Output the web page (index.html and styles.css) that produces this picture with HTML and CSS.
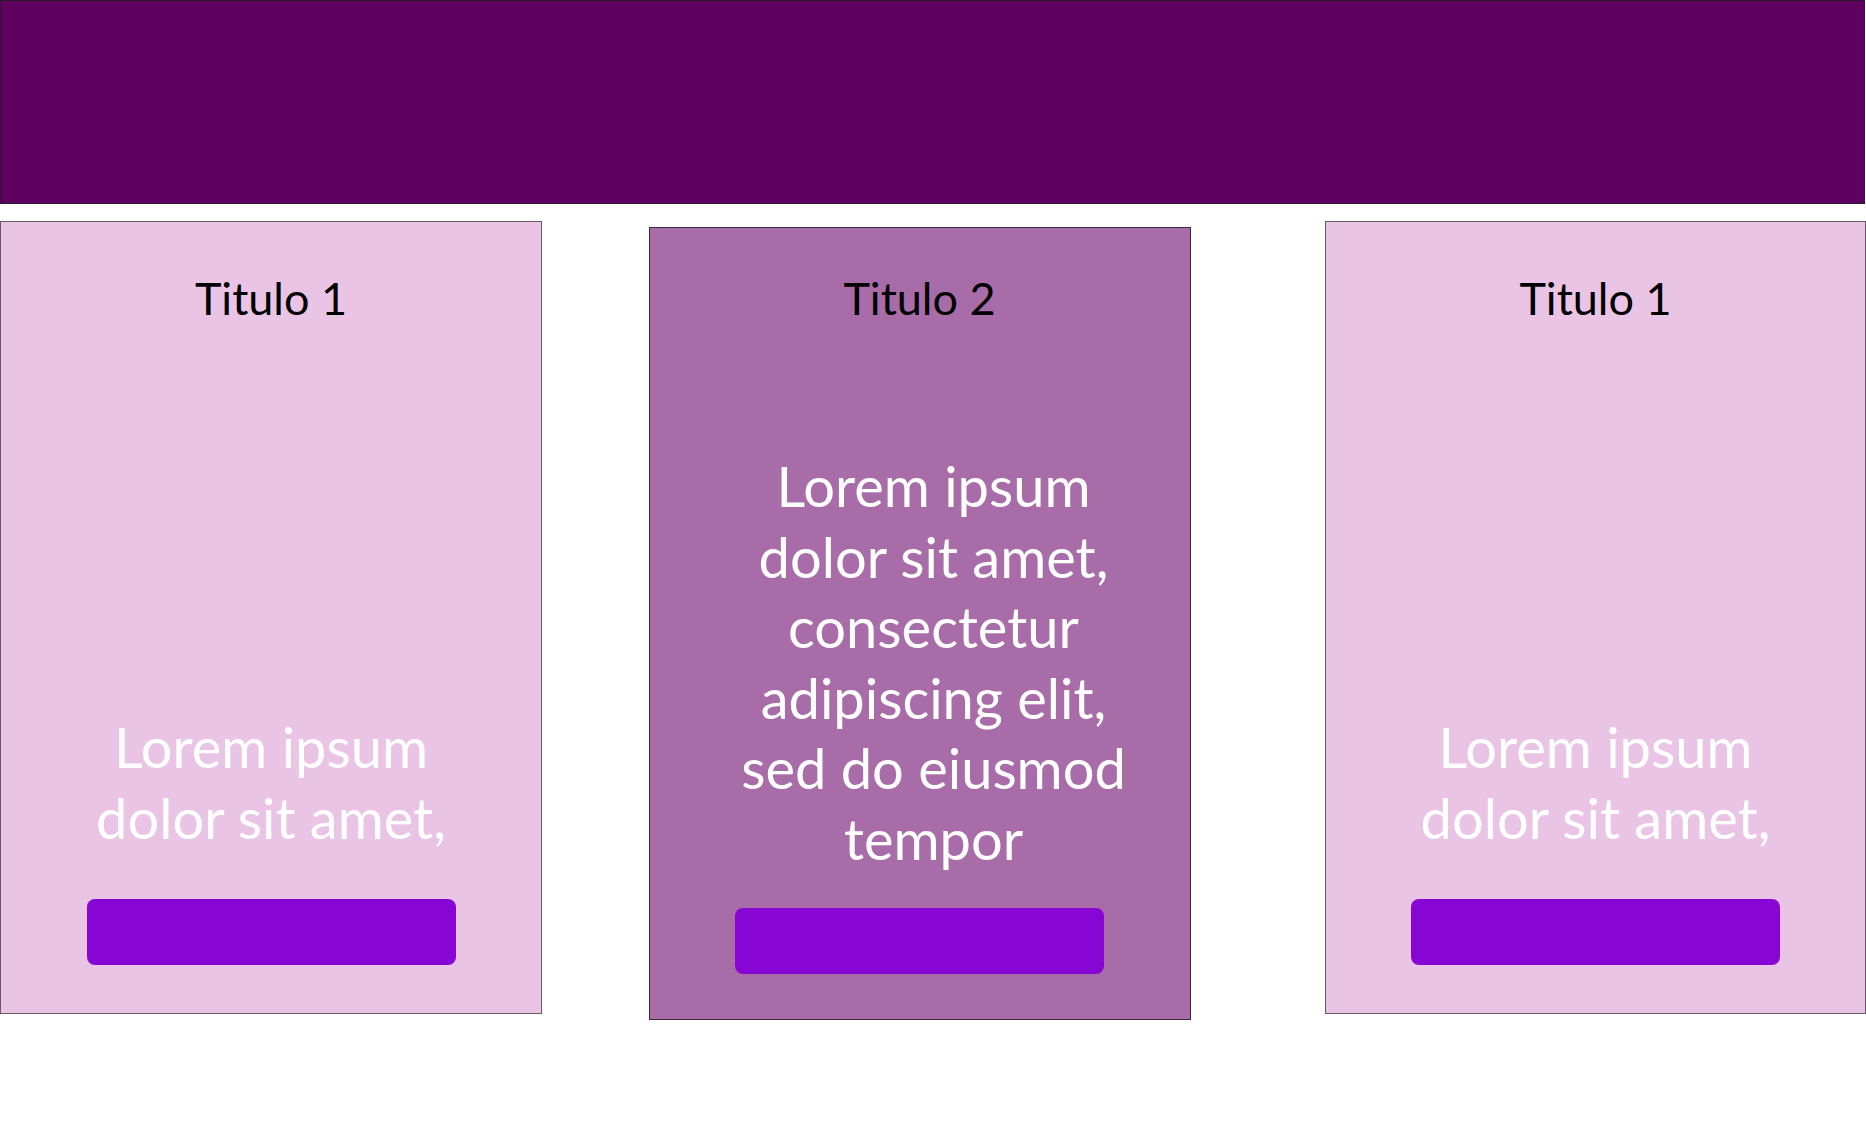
FILE: index.html
```html
<!DOCTYPE html>
<html lang="es">
<head>
<meta charset="utf-8">
<title>Tarjetas</title>
<link rel="stylesheet" href="styles.css">
</head>
<body>
<header class="topbar"></header>
<main class="cards">
  <section class="card">
    <h2 class="card-title">Titulo 1</h2>
    <div class="spacer"></div>
    <p class="card-text">Lorem ipsum dolor sit amet,</p>
    <button class="card-btn" type="button"></button>
  </section>
  <section class="card card--featured">
    <h2 class="card-title">Titulo 2</h2>
    <div class="spacer"></div>
    <p class="card-text">Lorem ipsum dolor sit amet, consectetur adipiscing elit, sed do eiusmod tempor</p>
    <button class="card-btn" type="button"></button>
  </section>
  <section class="card">
    <h2 class="card-title">Titulo 1</h2>
    <div class="spacer"></div>
    <p class="card-text">Lorem ipsum dolor sit amet,</p>
    <button class="card-btn" type="button"></button>
  </section>
</main>
</body>
</html>
```

FILE: styles.css
```css
* { box-sizing: border-box; }

html, body {
  margin: 0;
  padding: 0;
  background: #ffffff;
  font-family: Lato, "Open Sans", "Liberation Sans", sans-serif;
}

.topbar {
  width: 1865px;
  height: 204px;
  background: #5f0060;
  border: 1px solid #2c1a2c;
}

.cards {
  display: flex;
  justify-content: space-between;
  align-items: flex-start;
  margin-top: 17px;
  width: 1866px;
}

.card {
  width: 542px;
  height: 793px;
  background: #eac4e5;
  border: 1px solid #675a66;
  display: flex;
  flex-direction: column;
  align-items: center;
}

.card:last-child {
  width: 541px;
}

.card--featured {
  background: #a86ca8;
  border-color: #3a2b3a;
  margin-top: 6px;
  margin-right: 28px;
}

.card-title {
  margin: 49px 0 0;
  font-size: 45px;
  line-height: 55px;
  font-weight: 400;
  color: #000000;
  text-align: center;
}

.card--featured .card-title {
  margin-top: 43px;
}

.spacer {
  flex: 1;
}

.card-text {
  margin: 0;
  width: 420px;
  font-size: 56px;
  line-height: 70.5px;
  font-weight: 400;
  color: #ffffff;
  text-align: center;
}

.card--featured .card-text {
  width: 448px;
  padding-left: 28px;
}

.card-btn {
  display: block;
  width: 369px;
  height: 66px;
  margin: 46px 0 48px;
  padding: 0;
  border: none;
  border-radius: 8px;
  background: #8806d4;
}

.card--featured .card-btn {
  margin: 34px 0 45px;
}
```
